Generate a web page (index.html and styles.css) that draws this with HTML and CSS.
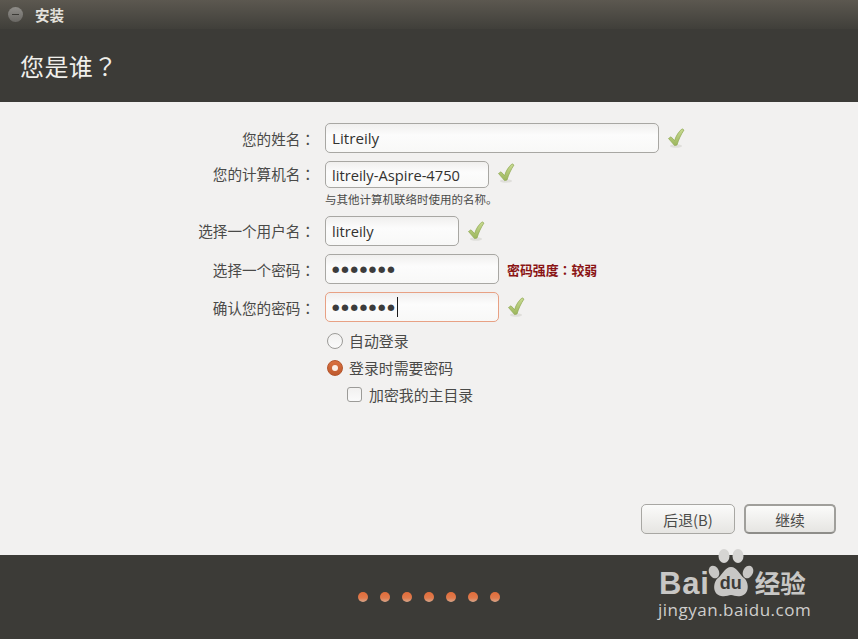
FILE: index.html
```html
<!DOCTYPE html>
<html lang="zh-CN">
<head>
<meta charset="utf-8">
<title>安装</title>
<link rel="stylesheet" href="styles.css">
</head>
<body>
<svg class="defs" width="0" height="0" aria-hidden="true">
  <defs>
    <linearGradient id="checkFill" x1="0" y1="0" x2="0" y2="1">
      <stop offset="0" stop-color="#c9db92"/>
      <stop offset="1" stop-color="#9cb65c"/>
    </linearGradient>
    <symbol id="check" viewBox="0 0 20 22">
      <ellipse cx="10" cy="19" rx="6" ry="1.800" fill="#e0dfdb"/>
      <path d="M2.500 11.500 L5 9.800 L8.600 13.600 C10 8.500 12.800 4.800 16 1.800 L18 3 C15 7.500 12.600 12.500 11 18 L8.600 18.600 Z" fill="url(#checkFill)" stroke="#8ea852" stroke-width="0.7" stroke-linejoin="round"/>
    </symbol>
  </defs>
</svg>
<div class="window">
  <div class="titlebar">
    <span class="minimize"><span class="minimize-bar"></span></span>
    <span class="window-title">安装</span>
  </div>
  <header class="page-header"><h1>您是谁<span class="punct" lang="zh-TW">？</span></h1></header>
  <main class="content">
    <form class="form">
      <div class="row row-name">
        <label class="label">您的姓名<span class="punct" lang="zh-TW">：</span></label>
        <div class="input input-wide">Litreily</div>
        <svg class="check"><use href="#check"/></svg>
      </div>
      <div class="row row-host">
        <label class="label">您的计算机名<span class="punct" lang="zh-TW">：</span></label>
        <div class="input input-host">litreily-Aspire-4750</div>
        <svg class="check"><use href="#check"/></svg>
      </div>
      <p class="hint">与其他计算机联络时使用的名称。</p>
      <div class="row row-user">
        <label class="label">选择一个用户名<span class="punct" lang="zh-TW">：</span></label>
        <div class="input input-user">litreily</div>
        <svg class="check"><use href="#check"/></svg>
      </div>
      <div class="row row-gap">
        <label class="label">选择一个密码<span class="punct" lang="zh-TW">：</span></label>
        <div class="input input-pass"><span class="dots">●●●●●●●</span></div>
        <span class="strength">密码强度<span class="punct" lang="zh-TW">：</span>较弱</span>
      </div>
      <div class="row row-gap">
        <label class="label">确认您的密码<span class="punct" lang="zh-TW">：</span></label>
        <div class="input input-pass input-focus"><span class="dots">●●●●●●●</span><span class="caret"></span></div>
        <svg class="check"><use href="#check"/></svg>
      </div>
      <div class="options">
        <div class="option"><span class="radio"></span>自动登录</div>
        <div class="option"><span class="radio radio-on"><span class="radio-dot"></span></span>登录时需要密码</div>
        <div class="option option-sub"><span class="checkbox"></span>加密我的主目录</div>
      </div>
    </form>
    <div class="actions">
      <button class="btn" type="button">后退(B)</button>
      <button class="btn btn-default" type="button">继续</button>
    </div>
  </main>
  <footer class="footer">
    <div class="dots-row">
      <span class="step"></span><span class="step"></span><span class="step"></span><span class="step"></span><span class="step"></span><span class="step"></span><span class="step"></span>
    </div>
  </footer>
</div>
<div class="watermark">
  <div class="wm-top">
    <span class="wm-bai">Bai</span>
    <span class="wm-paw">
      <svg width="46" height="50" viewBox="0 0 46 50">
        <ellipse cx="6" cy="24" rx="5" ry="6.500" fill="#c8c7c5" transform="rotate(-25 6 24)"/>
        <ellipse cx="16" cy="8" rx="5.500" ry="7" fill="#d6d5d3"/>
        <ellipse cx="30" cy="8" rx="5.500" ry="7" fill="#d6d5d3"/>
        <ellipse cx="40" cy="24" rx="5" ry="6.500" fill="#c8c7c5" transform="rotate(25 40 24)"/>
        <path d="M23 19 C17 19 15 26 10 30 C5 34 4 46 13 48 C18 49 20 47 23 47 C26 47 28 49 33 48 C42 46 41 34 36 30 C31 26 29 19 23 19 Z" fill="#c8c7c5"/>
      </svg>
      <span class="wm-du">du</span>
    </span>
    <span class="wm-cn">经验</span>
  </div>
  <div class="wm-url">jingyan.baidu.com</div>
</div>
</body>
</html>
```
FILE: styles.css
```css
* { box-sizing: border-box; }
html, body { margin: 0; padding: 0; }
body {
  width: 858px;
  height: 639px;
  overflow: hidden;
  position: relative;
  font-family: "Open Sans", "Noto Sans CJK SC", sans-serif;
  color: #3c3c3c;
  background: #f2f1f0;
}
.defs { position: absolute; }
.window { display: flex; flex-direction: column; height: 639px; }
.punct { font-family: "Noto Sans CJK TC", sans-serif; }

.titlebar {
  height: 29px;
  flex: none;
  display: flex;
  align-items: center;
  padding-left: 8px;
  background: linear-gradient(#5c5850, #403f3a);
}
.minimize {
  width: 15px;
  height: 15px;
  border-radius: 50%;
  background: linear-gradient(#8f8d89, #6a6864);
  display: flex;
  align-items: center;
  justify-content: center;
}
.minimize-bar { width: 7px; height: 1px; background: #3c3b37; }
.window-title {
  margin-left: 12px;
  font-size: 14.500px;
  font-weight: 700;
  color: #e4e2dd;
  font-family: "Noto Sans CJK SC", sans-serif;
}

.page-header {
  height: 73px;
  flex: none;
  background: #3c3b37;
  padding: 6px 0 0 20px;
}
.page-header h1 {
  margin: 0;
  font-size: 24px;
  line-height: 62px;
  font-weight: 400;
  letter-spacing: 0.4px;
  color: #f0efeb;
  font-family: "Noto Sans CJK SC", sans-serif;
}

.content {
  flex: 1;
  display: flex;
  flex-direction: column;
  background: #f2f1f0;
  padding-top: 21px;
}
.form { display: flex; flex-direction: column; }
.row { display: flex; align-items: center; }
.row-host { margin-top: 8px; }
.row-gap { margin-top: 8px; }
.label {
  width: 315px;
  flex: none;
  text-align: right;
  font-size: 14.600px;
  color: #4a4a48;
  font-family: "Noto Sans CJK SC", sans-serif;
}
.row-host .label, .row-host .check { margin-bottom: 3px; }
.row-user .label { margin-bottom: 1px; }
.input {
  margin-left: 10px;
  height: 30px;
  flex: none;
  display: flex;
  align-items: center;
  padding-left: 6px;
  font-size: 14.700px;
  color: #33322f;
  border: 1px solid #a8a7a3;
  border-radius: 5px;
  background: linear-gradient(#f0efee, #fcfcfc 40%, #f8f8f7);
}
.input-wide { width: 334px; font-size: 15.200px; }
.input-host { width: 164px; height: 27px; }
.input-user { width: 134px; }
.input-pass { width: 174px; }
.input-focus { border-color: #e8a184; }
.dots { font-size: 8.500px; letter-spacing: 1.800px; color: #3c3c3c; font-family: "DejaVu Sans", sans-serif; }
.caret { width: 1px; height: 20px; background: #1a1a1a; margin-left: 0; }
.check { width: 20px; height: 22px; margin-left: 7px; flex: none; }
.hint {
  margin: 0;
  height: 28px;
  padding: 3px 0 0 325px;
  font-size: 11.500px;
  line-height: 16px;
  color: #4a4a48;
  font-family: "Noto Sans CJK SC", sans-serif;
}
.strength {
  margin-left: 8px;
  font-size: 12.900px;
  font-weight: 700;
  color: #8a1414;
  font-family: "Noto Sans CJK SC", sans-serif;
}

.options { margin-top: 5px; padding-left: 327px; display: flex; flex-direction: column; }
.option {
  height: 27px;
  display: flex;
  align-items: center;
  font-size: 14.900px;
  color: #4a4a48;
  font-family: "Noto Sans CJK SC", sans-serif;
}
.option-sub { padding-left: 20px; }
.radio {
  width: 16px;
  height: 16px;
  margin-right: 6px;
  border-radius: 50%;
  border: 1px solid #9c9b98;
  background: linear-gradient(#f2f1f0, #fafafa);
  display: flex;
  align-items: center;
  justify-content: center;
}
.radio-on { border-color: #b4552c; background: linear-gradient(#d9703f, #bf5a2e); }
.radio-dot { width: 6px; height: 6px; border-radius: 50%; background: #fbeee6; }
.checkbox {
  width: 15px;
  height: 15px;
  margin-right: 7px;
  border: 1px solid #9c9b98;
  border-radius: 3px;
  background: linear-gradient(#f2f1f0, #fafafa);
}

.actions { margin-top: auto; padding: 0 22px 21px 0; display: flex; justify-content: flex-end; gap: 9px; }
.btn {
  width: 94px;
  height: 30px;
  padding: 0;
  font-size: 14.800px;
  color: #4a4a48;
  font-family: "Noto Sans CJK SC", sans-serif;
  border: 1px solid #a8a7a3;
  border-radius: 5px;
  background: linear-gradient(#fbfbfa, #e6e5e2);
}
.btn-default { width: 92px; border: 2px solid #a09f9b; border-bottom-color: #8e8d89; }

.footer {
  height: 84px;
  flex: none;
  background: #3c3b37;
  display: flex;
  justify-content: center;
  padding: 37px 0 0 0;
}
.dots-row { display: flex; gap: 12px; height: 10px; }
.step {
  width: 10px;
  height: 10px;
  border-radius: 50%;
  background: linear-gradient(#e06c3a, #e07a4c 60%, #d8a88c);
}

.watermark {
  position: absolute;
  left: 658px;
  top: 548px;
  width: 154px;
  color: #c8c7c5;
}
.wm-top { display: flex; align-items: flex-start; height: 50px; }
.wm-bai {
  font-family: "Liberation Sans", sans-serif;
  font-weight: 700;
  font-size: 31px;
  line-height: 31px;
  letter-spacing: 0.800px;
  margin: 20px 0 0 1px;
}
.wm-paw { position: relative; width: 46px; height: 50px; margin-left: -2px; flex: none; }
.wm-paw svg { display: block; }
.wm-du {
  position: absolute;
  left: 12px;
  top: 26px;
  font-family: "Liberation Sans", sans-serif;
  font-weight: 700;
  font-size: 18px;
  line-height: 18px;
  color: #3c3b37;
}
.wm-cn {
  font-family: "Noto Sans CJK SC", sans-serif;
  font-weight: 700;
  font-size: 25.500px;
  line-height: 30px;
  margin: 19px 0 0 1px;
  white-space: nowrap;
}
.wm-url {
  font-family: "Open Sans", sans-serif;
  font-size: 17px;
  line-height: 20px;
  letter-spacing: 0.500px;
  margin-top: 2px;
  color: #cfcecc;
  white-space: nowrap;
}
```
